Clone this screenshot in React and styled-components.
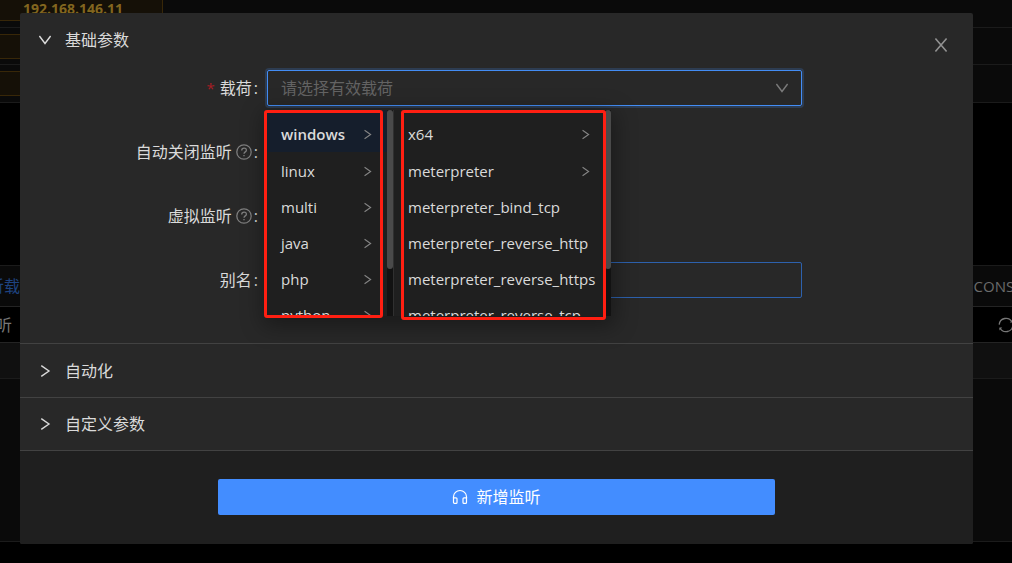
import React from "react";
import styled, { createGlobalStyle } from "styled-components";

const platforms = ["windows", "linux", "multi", "java", "php", "python"];

const payloads = [
  { name: "x64", children: true },
  { name: "meterpreter", children: true },
  { name: "meterpreter_bind_tcp" },
  { name: "meterpreter_reverse_http" },
  { name: "meterpreter_reverse_https" },
  { name: "meterpreter_reverse_tcp" },
];

const Arrow = ({ dir = "right", size = 11 }) => (
  <svg width={size} height={size} viewBox="0 0 12 12" fill="none" stroke="currentColor" strokeWidth="1.2" aria-hidden="true">
    {dir === "right" ? <path d="M2.8 1.4 L9.4 6 L2.8 10.6" /> : <path d="M1.2 2.6 L6 9 L10.8 2.6" />}
  </svg>
);

const Question = () => (
  <svg width="16" height="16" viewBox="0 0 16 16" fill="none" stroke="currentColor" strokeWidth="1.3" aria-hidden="true">
    <circle cx="8" cy="8" r="7.2" />
    <path d="M5.7 6.4 C5.7 3.3 10.4 3.3 10.4 6.2 C10.4 8 8 7.8 8 9.8" />
    <path d="M8 10.9 V12.3" />
  </svg>
);

const Headset = () => (
  <svg width="16" height="16" viewBox="0 0 16 16" fill="none" stroke="currentColor" strokeWidth="1.2" aria-hidden="true">
    <path d="M1.5 9.3 V7.8 a6.5 6.3 0 0 1 13 0 V9.3" />
    <path d="M1.5 8.8 H4 a1 1 0 0 1 1 1 V13.4 a1 1 0 0 1 -1 1 H2.5 a1 1 0 0 1 -1 -1 Z" />
    <path d="M14.5 8.8 H12 a1 1 0 0 0 -1 1 V13.4 a1 1 0 0 0 1 1 H13.5 a1 1 0 0 0 1 -1 Z" />
  </svg>
);

const Reload = () => (
  <svg width="16" height="16" viewBox="0 0 16 16" fill="none" stroke="currentColor" strokeWidth="1.3" aria-hidden="true">
    <path d="M1.2 7.6 A6.8 6.8 0 0 1 14 5 M14.8 8.4 A6.8 6.8 0 0 1 2 11" />
    <path d="M14.6 2.6 V5.4 H11.8 Z M1.4 13.4 V10.6 H4.2 Z" fill="currentColor" stroke="none" />
  </svg>
);

const Background = () => (
  <Backdrop aria-hidden="true">
    <HostRow $first><HostTag $first>192.168.146.11</HostTag></HostRow>
    <HostRow><HostTag /></HostRow>
    <HostRow><HostTag /></HostRow>
    <Blank />
    <TabBar>
      <TabName>监听载荷</TabName>
      <span>CONSOLE</span>
    </TabBar>
    <ToolBar>
      <ToolName>监听</ToolName>
      <Reload />
    </ToolBar>
    <HeadRow />
    <Rows />
  </Backdrop>
);

const Column = ({ items, active, wide }) => (
  <Menu $wide={wide}>
    <Options role="listbox">
      {items.map((item) => (
        <Option key={item.name} role="option" aria-selected={item.name === active} $active={item.name === active}>
          {item.name}
          {item.children && <Muted><Arrow /></Muted>}
        </Option>
      ))}
    </Options>
    <Scrollbar><Thumb /></Scrollbar>
  </Menu>
);

const App = () => {
  return (
    <>
      <GlobalStyle />
      <Page>
        <Background />
        <Modal role="dialog" aria-label="新增监听">
          <Close type="button" aria-label="关闭">
            <svg width="16" height="16" viewBox="0 0 16 16" fill="none" stroke="currentColor" strokeWidth="1.6">
              <path d="M2.4 1.4 L13.6 14.6 M13.6 1.4 L2.4 14.6" />
            </svg>
          </Close>
          <Panel>
            <PanelHeader type="button" aria-expanded="true">
              <Arrow dir="down" size={14} />
              基础参数
            </PanelHeader>
            <Form>
              <Field>
                <Label htmlFor="payload"><Star>*</Star>载荷<Colon>:</Colon></Label>
                <SelectWrap>
                  <Input id="payload" placeholder="请选择有效载荷" $focus readOnly />
                  <SelectArrow><Arrow dir="down" size={14} /></SelectArrow>
                  <Cascader>
                    <Column items={platforms.map((name) => ({ name, children: true }))} active="windows" />
                    <Column items={payloads} wide />
                    <Mark $left={-3} $width={119} $height={208} />
                    <Mark $left={134} $width={205} $height={210} />
                  </Cascader>
                </SelectWrap>
              </Field>
              <Field>
                <Label as="span">自动关闭监听<Help><Question /></Help><Colon>:</Colon></Label>
              </Field>
              <Field>
                <Label as="span">虚拟监听<Help><Question /></Help><Colon>:</Colon></Label>
              </Field>
              <Field>
                <Label htmlFor="alias">别名<Colon>:</Colon></Label>
                <SelectWrap><Input id="alias" /></SelectWrap>
              </Field>
            </Form>
          </Panel>
          <Panel>
            <PanelHeader type="button" aria-expanded="false"><Arrow size={14} />自动化</PanelHeader>
          </Panel>
          <Panel>
            <PanelHeader type="button" aria-expanded="false" $last><Arrow size={14} />自定义参数</PanelHeader>
          </Panel>
          <Footer>
            <Submit type="button"><Headset />新增监听</Submit>
          </Footer>
        </Modal>
      </Page>
    </>
  );
};

export default App;

const GlobalStyle = createGlobalStyle`
  * {
    box-sizing: border-box;
  }
  body {
    margin: 0;
    background: #000;
    color: #dadada;
    font-family: "Open Sans", "Noto Sans CJK SC", sans-serif;
    font-size: 16px;
    line-height: 24px;
  }
  button, input {
    font: inherit;
    color: inherit;
  }
  svg {
    display: block;
    flex: none;
  }
`;

const Page = styled.main`
  position: relative;
  min-height: 100vh;
  overflow: hidden;
  padding: 13px 39px 19px 20px;
`;

const Backdrop = styled.div`
  position: absolute;
  inset: 0;
  display: flex;
  flex-direction: column;
`;

const HostRow = styled.div`
  display: flex;
  align-items: ${(props) => (props.$first ? "flex-end" : "center")};
  height: ${(props) => (props.$first ? "28px" : "37px")};
  padding-bottom: ${(props) => (props.$first ? "6px" : "0")};
  background: #0a0a0a;
  border-bottom: 1px solid #1b1b1b;
  &:nth-child(3) {
    height: 38px;
  }
`;

const HostTag = styled.span`
  width: 163px;
  height: 25px;
  padding-left: 23px;
  background: #151007;
  border: 1px solid #382708;
  border-left: 0;
  color: #82661f;
  font-size: 14px;
  font-weight: 700;
  line-height: 24px;
`;

const Blank = styled.div`
  height: 162px;
`;

const TabBar = styled.div`
  display: flex;
  align-items: center;
  justify-content: space-between;
  height: 42px;
  margin-right: -30px;
  background: #0a0a0a;
  border-top: 1px solid #1b1b1b;
  border-bottom: 1px solid #242424;
  color: #6b6b6b;
  font-size: 15px;
`;

const TabName = styled.span`
  margin-left: -28px;
  color: #1e4380;
  font-size: 16px;
`;

const ToolBar = styled.div`
  display: flex;
  align-items: center;
  justify-content: space-between;
  height: 35px;
  margin-right: -2px;
  color: #777;
`;

const ToolName = styled.span`
  margin-left: -20px;
`;

const HeadRow = styled.div`
  height: 37px;
  background: #101010;
  border-top: 1px solid #242424;
  border-bottom: 1px solid #1b1b1b;
`;

const Rows = styled.div`
  flex: 1;
  margin-bottom: 21px;
  background: #0a0a0a;
  border-bottom: 1px solid #1b1b1b;
`;

const Modal = styled.section`
  position: relative;
  overflow: hidden;
  background: #282828;
  border-radius: 2px;
`;

const Close = styled.button`
  position: absolute;
  top: 24px;
  right: 24px;
  padding: 0;
  background: none;
  border: 0;
  color: #919191;
`;

const Panel = styled.div`
  border-bottom: 1px solid #424242;
`;

const PanelHeader = styled.button`
  display: flex;
  align-items: center;
  gap: 13px;
  width: 100%;
  height: ${(props) => (props.$last ? "52px" : "53px")};
  padding: 0 18px;
  background: none;
  border: 0;
`;

const Form = styled.form`
  display: flex;
  flex-direction: column;
  gap: 28px;
  padding: 4px 171px 45px 18px;
`;

const Field = styled.div`
  display: flex;
  align-items: center;
  height: 36px;
`;

const Label = styled.label`
  display: flex;
  align-items: center;
  justify-content: flex-end;
  width: 229px;
  padding-right: 9px;
`;

const Star = styled.span`
  margin-right: 5px;
  color: #a61d24;
  font-size: 15px;
`;

const Colon = styled.span`
  margin-left: 2px;
`;

const Help = styled.span`
  margin-left: 4px;
  color: #7e7e7e;
`;

const SelectWrap = styled.div`
  position: relative;
  flex: 1;
`;

const Input = styled.input`
  display: block;
  width: 100%;
  height: 36px;
  padding: 0 13px;
  background: transparent;
  border: 1px solid ${(props) => (props.$focus ? "#438df5" : "#2d61ad")};
  border-radius: 2px;
  box-shadow: ${(props) => (props.$focus ? "0 0 0 2px rgba(67, 141, 245, 0.2)" : "none")};
  outline: 0;
  &::placeholder {
    color: #636363;
    opacity: 1;
  }
`;

const SelectArrow = styled.span`
  position: absolute;
  top: 11px;
  right: 13px;
  color: #7a7a7a;
`;

const Cascader = styled.div`
  position: absolute;
  z-index: 1;
  top: 40px;
  left: 0;
  display: flex;
  height: 206px;
  background: #1f1f1f;
  box-shadow: 0 6px 20px 4px rgba(0, 0, 0, 0.35);
  font-size: 15px;
`;

const Menu = styled.div`
  display: flex;
  width: ${(props) => (props.$wide ? "217px" : "127px")};
  border-right: ${(props) => (props.$wide ? "0" : "1px solid #303030")};
`;

const Options = styled.ul`
  flex: 1;
  margin: 0;
  padding: 0;
  overflow: hidden;
  list-style: none;
`;

const Option = styled.li`
  display: flex;
  align-items: center;
  justify-content: space-between;
  height: 36px;
  padding: 0 14px;
  background: ${(props) => (props.$active ? "#151e2c" : "transparent")};
  font-weight: ${(props) => (props.$active ? 600 : 400)};
  &:first-child {
    height: 42px;
    margin-bottom: 1px;
    padding-top: 6px;
  }
`;

const Muted = styled.span`
  color: #858585;
`;

const Scrollbar = styled.div`
  width: 6px;
  background: #121212;
`;

const Thumb = styled.div`
  height: 159px;
  background: #4a4a4a;
  border-radius: 3px;
`;

const Mark = styled.div`
  position: absolute;
  top: 0;
  left: ${(props) => props.$left}px;
  width: ${(props) => props.$width}px;
  height: ${(props) => props.$height}px;
  border: 3px solid #ff1f12;
  border-radius: 3px;
`;

const Footer = styled.footer`
  display: flex;
  justify-content: center;
  padding: 28px 198px 29px;
  background: #1f1f1f;
`;

const Submit = styled.button`
  display: flex;
  align-items: center;
  justify-content: center;
  gap: 8px;
  width: 100%;
  height: 36px;
  background: #438dff;
  border: 0;
  border-radius: 2px;
  color: #fff;
`;
